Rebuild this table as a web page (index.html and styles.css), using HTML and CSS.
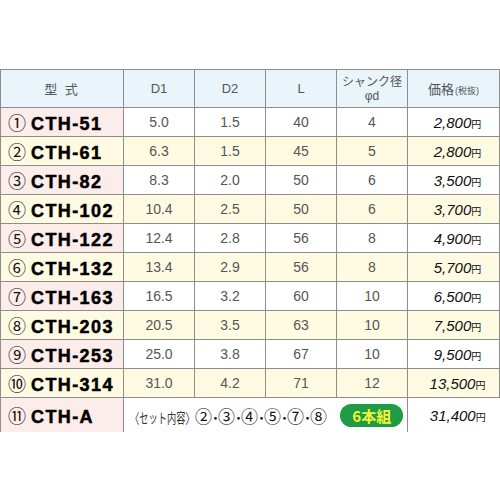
FILE: index.html
```html
<!DOCTYPE html>
<html lang="ja">
<head>
<meta charset="utf-8">
<link rel="stylesheet" href="styles.css">
</head>
<body>
<div class="page">
<table class="spec">
  <colgroup>
    <col class="c-model"><col class="c-num"><col class="c-num"><col class="c-num"><col class="c-num"><col class="c-price">
  </colgroup>
  <thead>
    <tr>
      <th class="h-model">型 式</th>
      <th>D1</th>
      <th>D2</th>
      <th>L</th>
      <th class="h-shank">シャンク径<br>φd</th>
      <th>価格<span class="tax">(税抜)</span></th>
    </tr>
  </thead>
  <tbody>
    <tr><td class="model"><span class="no">①</span><b>CTH-51</b></td><td>5.0</td><td>1.5</td><td>40</td><td>4</td><td class="price">2,800<span class="yen">円</span></td></tr>
    <tr class="alt"><td class="model"><span class="no">②</span><b>CTH-61</b></td><td>6.3</td><td>1.5</td><td>45</td><td>5</td><td class="price">2,800<span class="yen">円</span></td></tr>
    <tr><td class="model"><span class="no">③</span><b>CTH-82</b></td><td>8.3</td><td>2.0</td><td>50</td><td>6</td><td class="price">3,500<span class="yen">円</span></td></tr>
    <tr class="alt"><td class="model"><span class="no">④</span><b>CTH-102</b></td><td>10.4</td><td>2.5</td><td>50</td><td>6</td><td class="price">3,700<span class="yen">円</span></td></tr>
    <tr><td class="model"><span class="no">⑤</span><b>CTH-122</b></td><td>12.4</td><td>2.8</td><td>56</td><td>8</td><td class="price">4,900<span class="yen">円</span></td></tr>
    <tr class="alt"><td class="model"><span class="no">⑥</span><b>CTH-132</b></td><td>13.4</td><td>2.9</td><td>56</td><td>8</td><td class="price">5,700<span class="yen">円</span></td></tr>
    <tr><td class="model"><span class="no">⑦</span><b>CTH-163</b></td><td>16.5</td><td>3.2</td><td>60</td><td>10</td><td class="price">6,500<span class="yen">円</span></td></tr>
    <tr class="alt"><td class="model"><span class="no">⑧</span><b>CTH-203</b></td><td>20.5</td><td>3.5</td><td>63</td><td>10</td><td class="price">7,500<span class="yen">円</span></td></tr>
    <tr><td class="model"><span class="no">⑨</span><b>CTH-253</b></td><td>25.0</td><td>3.8</td><td>67</td><td>10</td><td class="price">9,500<span class="yen">円</span></td></tr>
    <tr class="alt"><td class="model"><span class="no">⑩</span><b>CTH-314</b></td><td>31.0</td><td>4.2</td><td>71</td><td>12</td><td class="price">13,500<span class="yen">円</span></td></tr>
    <tr class="set"><td class="model"><span class="no">⑪</span><b>CTH-A</b></td><td colspan="3" class="contents"><span class="lbl">〈セット内容〉</span><span class="cn">②</span><span class="dot">･</span><span class="cn">③</span><span class="dot">･</span><span class="cn">④</span><span class="dot">･</span><span class="cn">⑤</span><span class="dot">･</span><span class="cn">⑦</span><span class="dot">･</span><span class="cn">⑧</span></td><td class="pillcell"><span class="pill">6本組</span></td><td class="price">31,400<span class="yen">円</span></td></tr>
  </tbody>
</table>
</div>
</body>
</html>
```
FILE: styles.css
```css
html, body {
  margin: 0;
  padding: 0;
  background: #ffffff;
}
.page {
  padding-top: 69px;
  width: 500px;
  height: 500px;
  box-sizing: border-box;
}
.spec {
  border-collapse: collapse;
  table-layout: fixed;
  width: 499px;
  font-family: "Liberation Sans", "Noto Sans CJK JP", sans-serif;
  color: #555;
}
.c-model { width: 123px; }
.c-num { width: 71px; }
.c-price { width: 92px; }
.spec th, .spec td {
  border: 1px solid #8e8e8e;
  padding: 0;
  text-align: center;
  vertical-align: middle;
}
.spec thead th {
  height: 37px;
  background: #e9f4fb;
  font-weight: normal;
  font-size: 13px;
  color: #555;
}
.h-model { letter-spacing: 2px; }
.h-shank { font-size: 12px !important; line-height: 14px; }
.tax { font-size: 9px; margin-left: 1px; }
.spec tbody td {
  height: 28px;
  font-size: 14px;
  color: #555;
}
.spec tbody tr.alt td { background: #fffbe3; }
.spec tbody td.model {
  background: #fcecea;
  text-align: left;
  padding-left: 7px;
  color: #111;
  white-space: nowrap;
}
.model .no {
  font-family: "Noto Sans CJK JP", sans-serif;
  font-size: 18px;
  margin-right: 5px;
  color: #111;
}
.model b {
  font-family: "Liberation Sans", sans-serif;
  font-weight: bold;
  font-size: 18px;
  letter-spacing: 1.4px;
  color: #000;
  -webkit-text-stroke: 0.5px #000;
}
.spec tbody td.price {
  font-style: italic;
  font-size: 15px;
  color: #111;
  padding-left: 8px;
}
.yen {
  font-size: 10px;
  font-style: normal;
}
.spec tbody tr.set td {
  height: 34px;
  background: #fff;
  border-bottom: none;
}
.spec tbody tr.set td.model { background: #fcecea; }
.spec tbody tr.set td.price { border-right: none; }
.spec tbody td.contents {
  text-align: left;
  padding-left: 6px;
  font-family: "Noto Sans CJK JP", sans-serif;
  color: #222;
  border-right: none;
  white-space: nowrap;
}
.contents .lbl {
  display: inline-block;
  font-size: 14px;
  color: #333;
  transform: scaleX(0.66);
  transform-origin: left center;
  margin-right: -33px;
}
.contents .cn {
  font-size: 17px;
  color: #111;
}
.contents .dot {
  display: inline-block;
  width: 6px;
  text-align: center;
  font-size: 14px;
  font-weight: bold;
  color: #111;
}
.spec tbody td.pillcell { border-left: none; }
.pill {
  display: inline-block;
  width: 63px;
  height: 23px;
  line-height: 23px;
  border-radius: 12px;
  background: #1f9a45;
  color: #f4f43a;
  font-family: "Noto Sans CJK JP", sans-serif;
  font-weight: bold;
  font-size: 15px;
}
```
